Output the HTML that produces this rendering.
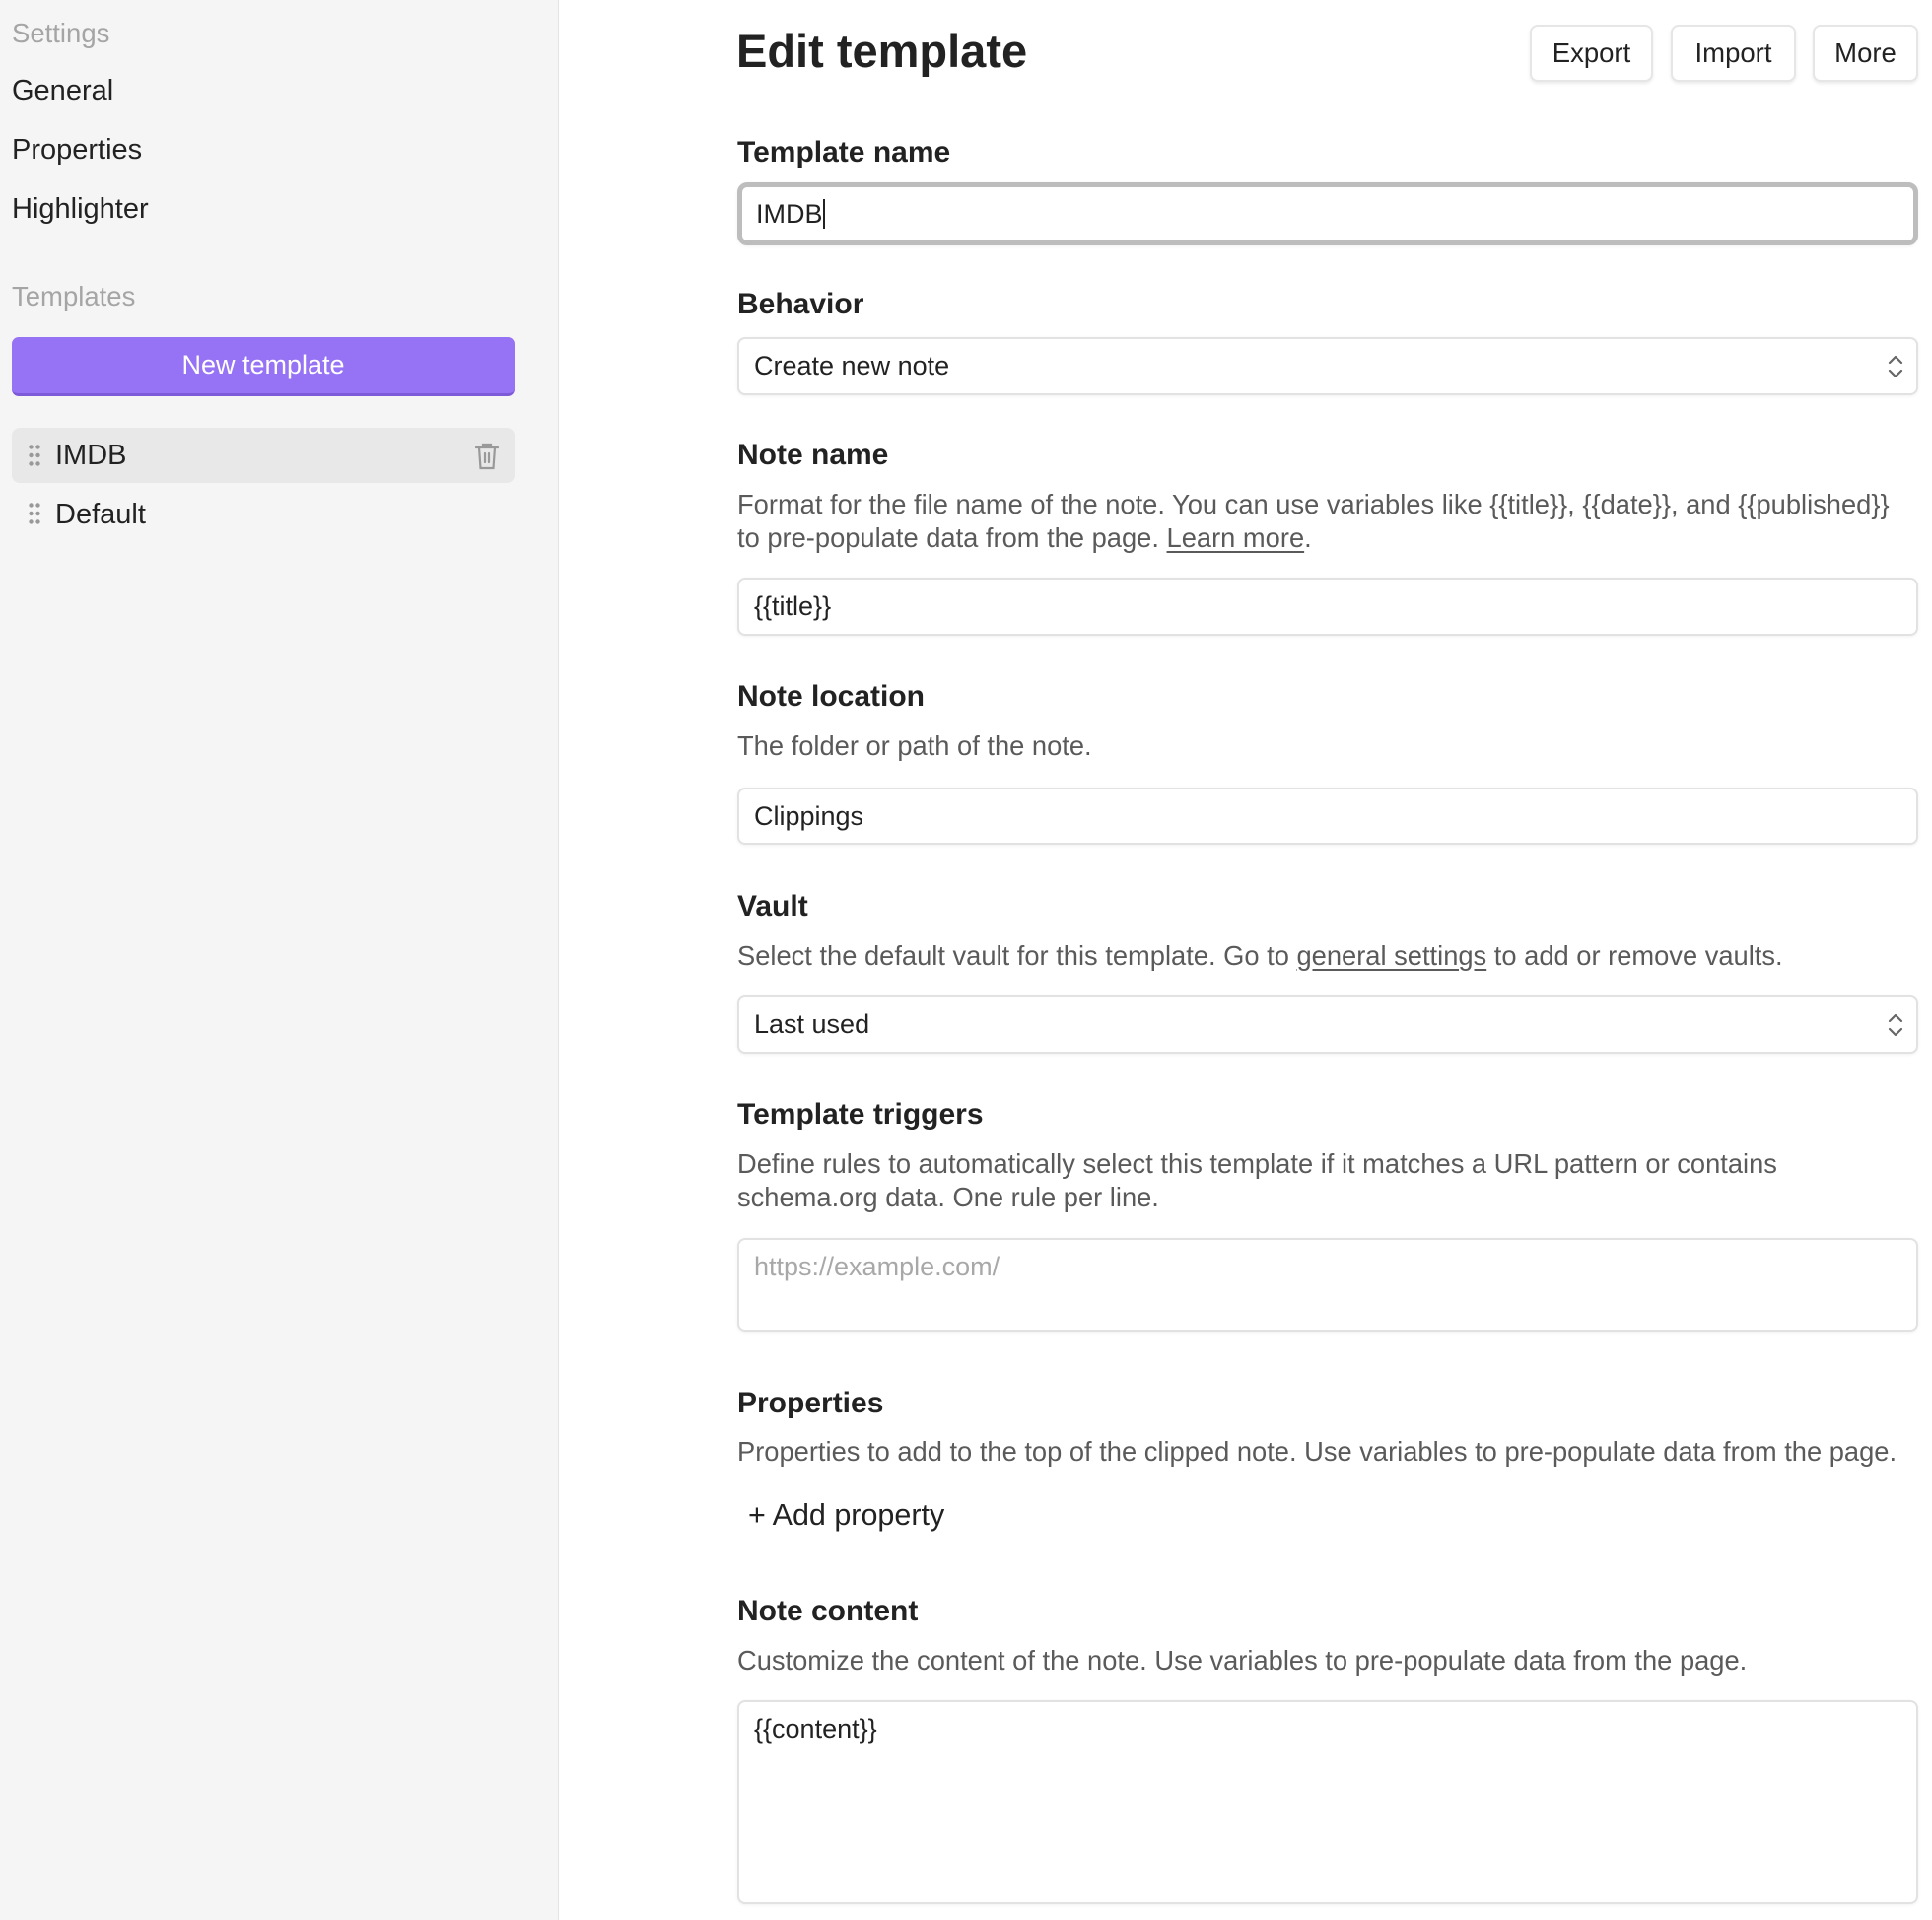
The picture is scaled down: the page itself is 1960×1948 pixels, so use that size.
<!DOCTYPE html>
<html><head><meta charset="utf-8"><style>
*{box-sizing:border-box;margin:0;padding:0}
body{width:1960px;height:1948px;background:#fff;font-family:"Liberation Sans",sans-serif;color:#222;position:relative;overflow:hidden}
.a{position:absolute;white-space:nowrap;line-height:30px}
#side{position:absolute;left:0;top:0;width:567px;height:1948px;background:#f5f5f5;border-right:1px solid #e3e3e3}
.s{font-size:29px;left:12px;color:#222}
.g{font-size:27.5px;left:12px;color:#a5a5a5}
.h{font-size:30px;font-weight:bold;left:748px}
.d{font-size:27.3px;left:748px;color:#5a5a5a;line-height:34px}
.box{position:absolute;left:748px;width:1198px;border:2px solid #e2e2e2;border-radius:8px;background:#fff;box-shadow:0 1px 3px rgba(0,0,0,.06);font-size:27px;padding-left:15px;display:flex;align-items:center}
.btn{position:absolute;top:25px;height:58px;border:2px solid #e6e6e6;border-radius:8px;font-size:27.5px;display:flex;align-items:center;justify-content:center;box-shadow:0 2px 3px rgba(0,0,0,.08);background:#fff}
u{text-decoration:underline;text-underline-offset:4px}
.dots{position:absolute;width:12px;height:22px}
</style></head><body>
<div id="side">
<div class="a g" style="top:19px">Settings</div>
<div class="a s" style="top:77px">General</div>
<div class="a s" style="top:137px">Properties</div>
<div class="a s" style="top:197px">Highlighter</div>
<div class="a g" style="top:286px">Templates</div>
<div style="position:absolute;left:12px;top:342px;width:510px;height:60px;background:#9672f4;border-radius:7px;border-bottom:3px solid #7d5ad8;color:#fff;font-size:27px;display:flex;align-items:center;justify-content:center">New template</div>
<div style="position:absolute;left:12px;top:434px;width:510px;height:56px;background:#e8e8e8;border-radius:8px"></div>
<svg class="dots" style="left:29px;top:451px" viewBox="0 0 12 22"><g fill="#999"><circle cx="2.5" cy="2.5" r="2.2"/><circle cx="9.5" cy="2.5" r="2.2"/><circle cx="2.5" cy="11" r="2.2"/><circle cx="9.5" cy="11" r="2.2"/><circle cx="2.5" cy="19.5" r="2.2"/><circle cx="9.5" cy="19.5" r="2.2"/></g></svg>
<div class="a s" style="left:56px;top:447px">IMDB</div>
<svg style="position:absolute;left:481px;top:448px" width="26" height="30" viewBox="0 0 26 30" fill="none" stroke="#999" stroke-width="2.2" stroke-linecap="round"><path d="M2 6h22M9 6V3h8v3M5 6l1.5 21h13L21 6M11 12v9M15 12v9"/></svg>
<svg class="dots" style="left:29px;top:510px" viewBox="0 0 12 22"><g fill="#999"><circle cx="2.5" cy="2.5" r="2.2"/><circle cx="9.5" cy="2.5" r="2.2"/><circle cx="2.5" cy="11" r="2.2"/><circle cx="9.5" cy="11" r="2.2"/><circle cx="2.5" cy="19.5" r="2.2"/><circle cx="9.5" cy="19.5" r="2.2"/></g></svg>
<div class="a s" style="left:56px;top:507px">Default</div>
</div>

<div class="a" style="left:747px;top:24px;font-size:47px;font-weight:bold;line-height:56px">Edit template</div>
<div class="btn" style="left:1552px;width:125px">Export</div>
<div class="btn" style="left:1695px;width:127px">Import</div>
<div class="btn" style="left:1839px;width:107px">More</div>

<div class="a h" style="top:140px">Template name</div>
<div class="box" style="top:185px;height:64px;border:5px solid #bdbdbd;border-radius:10px;padding-left:14px">IMDB<span style="display:inline-block;width:2px;height:30px;background:#222"></span></div>

<div class="a h" style="top:294px">Behavior</div>
<div class="box" style="top:342px;height:59px">Create new note
<svg style="position:absolute;right:12px;top:15px" width="18" height="26" viewBox="0 0 18 26" fill="none" stroke="#666" stroke-width="2.2" stroke-linecap="round" stroke-linejoin="round"><path d="M3 9l6-6 6 6M3 17l6 6 6-6"/></svg></div>

<div class="a h" style="top:447px">Note name</div>
<div class="a d" style="top:495px">Format for the file name of the note. You can use variables like {{title}}, {{date}}, and {{published}}</div>
<div class="a d" style="top:529px">to pre-populate data from the page. <u>Learn more</u>.</div>
<div class="box" style="top:586px;height:59px">{{title}}</div>

<div class="a h" style="top:692px">Note location</div>
<div class="a d" style="top:740px">The folder or path of the note.</div>
<div class="box" style="top:799px;height:58px">Clippings</div>

<div class="a h" style="top:905px">Vault</div>
<div class="a d" style="top:953px">Select the default vault for this template. Go to <u>general settings</u> to add or remove vaults.</div>
<div class="box" style="top:1010px;height:59px">Last used
<svg style="position:absolute;right:12px;top:15px" width="18" height="26" viewBox="0 0 18 26" fill="none" stroke="#666" stroke-width="2.2" stroke-linecap="round" stroke-linejoin="round"><path d="M3 9l6-6 6 6M3 17l6 6 6-6"/></svg></div>

<div class="a h" style="top:1116px">Template triggers</div>
<div class="a d" style="top:1164px">Define rules to automatically select this template if it matches a URL pattern or contains</div>
<div class="a d" style="top:1198px">schema.org data. One rule per line.</div>
<div class="box" style="top:1256px;height:95px;align-items:flex-start;padding-top:12px;color:#a8a8a8">https://example.com/</div>

<div class="a h" style="top:1409px">Properties</div>
<div class="a d" style="top:1456px">Properties to add to the top of the clipped note. Use variables to pre-populate data from the page.</div>
<div class="a" style="left:759px;top:1522px;font-size:30.5px">+ Add property</div>

<div class="a h" style="top:1620px">Note content</div>
<div class="a d" style="top:1668px">Customize the content of the note. Use variables to pre-populate data from the page.</div>
<div class="box" style="top:1725px;height:207px;align-items:flex-start;padding-top:12px">{{content}}</div>
</body></html>
